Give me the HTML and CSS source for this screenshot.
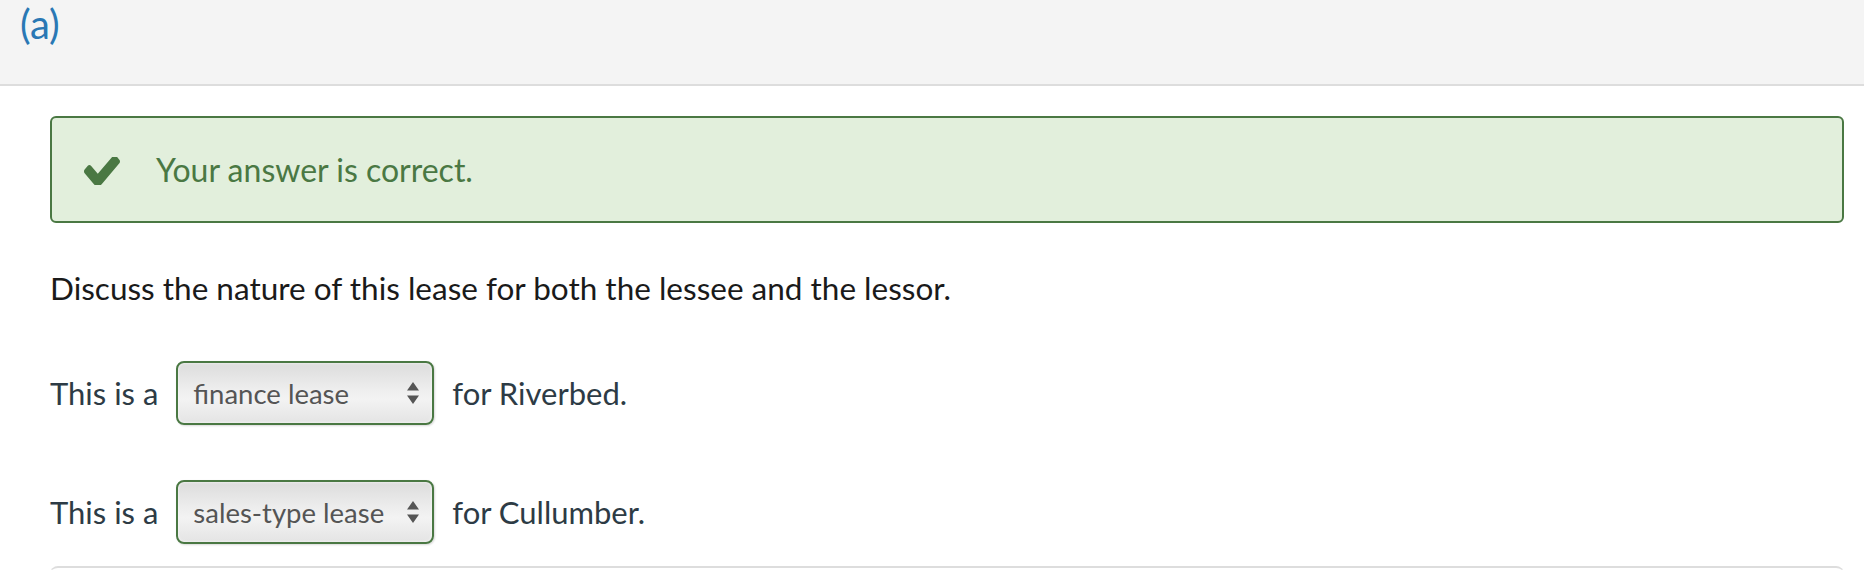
FILE: index.html
```html
<!DOCTYPE html>
<html lang="en">
<head>
    <meta charset="UTF-8">
    <meta name="viewport" content="width=device-width, initial-scale=1.0">
    <title>Question (a)</title>
    <link rel="stylesheet" href="styles.css">
</head>
<body>
    <div class="part-header">
        <span class="part-label">(a)</span>
    </div>

    <div class="part-body">
        <!-- Feedback -->
        <div class="feedback correct">
            <svg class="check" width="36" height="28" viewBox="121 402 1550 1024" preserveAspectRatio="none" aria-hidden="true">
                <path d="M1671 566q0 40-28 68l-724 724-136 136q-28 28-68 28t-68-28l-136-136-362-362q-28-28-28-68t28-68l136-136q28-28 68-28t68 28l294 295 656-657q28-28 68-28t68 28l136 136q28 28 28 68z" fill="#4a7843"/>
            </svg>
            <span>Your answer is correct.</span>
        </div>

        <p class="prompt">Discuss the nature of this lease for both the lessee and the lessor.</p>

        <div class="answer-row">
            <span>This is a</span>
            <span class="select-wrap">
                <select>
                    <option selected>finance lease</option>
                    <option>operating lease</option>
                </select>
                <svg class="arrows" width="14" height="22" viewBox="0 0 14 22" aria-hidden="true">
                    <path d="M7 0 L13 8.5 L1 8.5 Z M7 22 L13 13.5 L1 13.5 Z" fill="#555"/>
                </svg>
            </span>
            <span>for Riverbed.</span>
        </div>

        <div class="answer-row">
            <span>This is a</span>
            <span class="select-wrap">
                <select>
                    <option selected>sales-type lease</option>
                    <option>direct-financing lease</option>
                    <option>operating lease</option>
                </select>
                <svg class="arrows" width="14" height="22" viewBox="0 0 14 22" aria-hidden="true">
                    <path d="M7 0 L13 8.5 L1 8.5 Z M7 22 L13 13.5 L1 13.5 Z" fill="#555"/>
                </svg>
            </span>
            <span>for Cullumber.</span>
        </div>

        <div class="next-part"></div>
    </div>
</body>
</html>
```

FILE: styles.css
```css
body {
    font-family: Lato, "Open Sans", sans-serif;
    background: #fff;
    color: #2d3b45;
    margin: 0;
    padding: 0;
}
.part-header {
    height: 86px;
    box-sizing: border-box;
    background: #f4f4f4;
    border-bottom: 2px solid #dddddd;
    padding-left: 20px;
}
.part-label {
    display: block;
    color: #2a78b4;
    font-size: 40px;
    line-height: 48px;
}
.part-body {
    padding: 30px 20px 0 50px;
}
.feedback {
    display: flex;
    align-items: center;
    height: 107px;
    box-sizing: border-box;
    border: 2px solid #4a7843;
    border-radius: 6px;
    background: #e2efdc;
    color: #4a7843;
    font-size: 32px;
    padding-left: 32px;
}
.feedback .check {
    margin-right: 36px;
    margin-top: 2px;
}
.prompt {
    margin: 45px 0 0;
    font-size: 31.5px;
    line-height: 40px;
    color: #1a1a1a;
}
.answer-row {
    display: flex;
    align-items: center;
    gap: 18px;
    font-size: 31px;
    margin-top: 53px;
}
.answer-row + .answer-row {
    margin-top: 55px;
}
.select-wrap {
    position: relative;
    display: inline-block;
}
select {
    appearance: none;
    -webkit-appearance: none;
    width: 258px;
    height: 64px;
    padding: 0 40px 0 15px;
    border: 2px solid #4a7843;
    border-radius: 8px;
    background: linear-gradient(#dcdcdc, #eeeeee 45%, #f3f3f3 60%, #e4e4e4);
    box-shadow: inset 0 0 3px rgba(255, 255, 255, 0.9), 1px 1px 2px rgba(0, 0, 0, 0.15);
    font-family: Lato, sans-serif;
    font-size: 27.5px;
    color: #555;
    outline: none;
}
.arrows {
    position: absolute;
    right: 14px;
    top: 21px;
    pointer-events: none;
}
.next-part {
    margin-top: 22px;
    height: 10px;
    border-top: 2px solid #dddddd;
    border-radius: 8px 8px 0 0;
}
```
